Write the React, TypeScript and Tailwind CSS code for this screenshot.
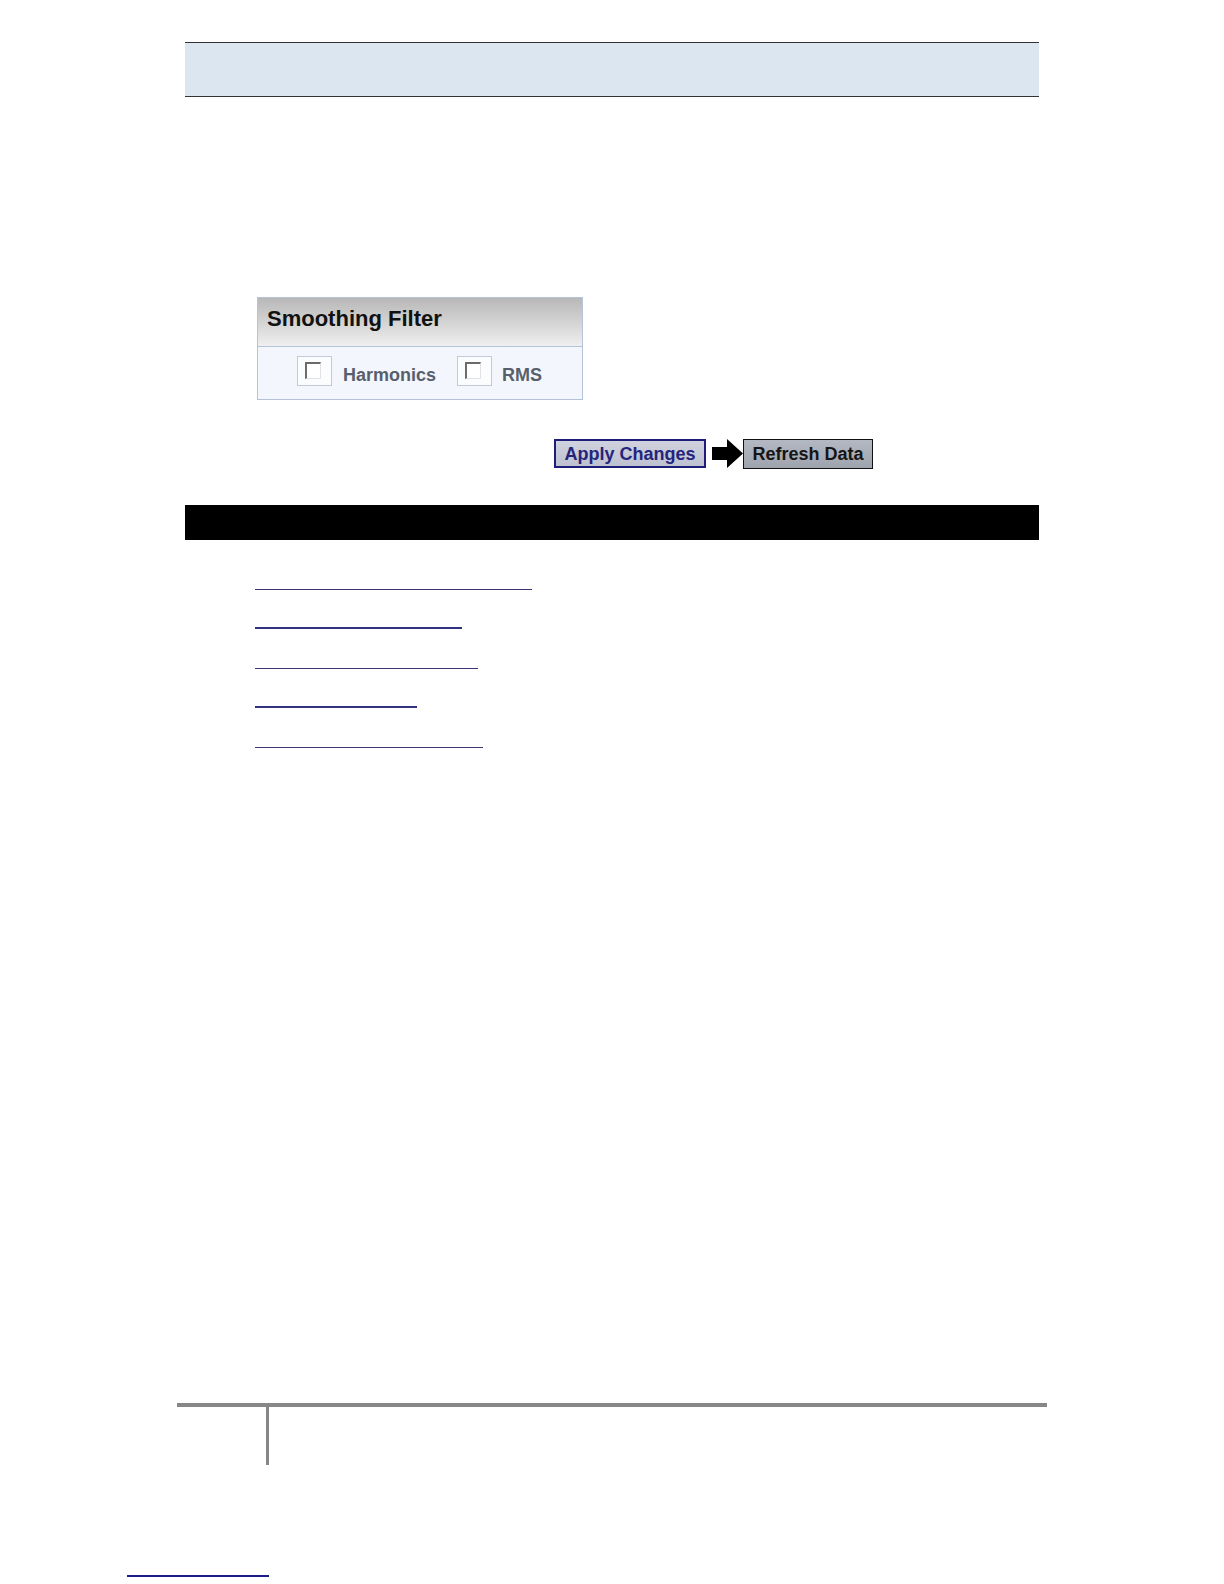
export default function App() {
  const links = [
    { w: 277, thick: false },
    { w: 207, thick: true },
    { w: 223, thick: false },
    { w: 162, thick: true },
    { w: 228, thick: false },
  ];

  return (
    <div className="min-h-[1584px] w-[1224px] bg-white font-['Liberation_Sans',Arial,sans-serif]">
      <div className="ml-[185px] w-[854px] pt-[42px]">
        {/* page header band */}
        <div className="h-[55px] border-y border-[#333] bg-[#dce6f1]" />

        {/* smoothing filter panel */}
        <div className="mt-[200px] ml-[72px] w-[326px] border border-[#b4c3d8]">
          <div className="h-[49px] border-b border-[#b4c3d8] bg-gradient-to-b from-[#b8b8b8] to-[#efefef] pl-[9px] pt-[8px]">
            <span className="text-[22px] leading-[25px] font-bold text-[#111]">Smoothing Filter</span>
          </div>
          <div className="flex h-[52px] items-start bg-[#f3f6fd] pl-[39px] pt-[9px]">
            <CheckCell />
            <span className="ml-[11px] mt-[8px] text-[18px] leading-[22px] font-bold text-[#585f6c]">Harmonics</span>
            <div className="ml-[21px]">
              <CheckCell />
            </div>
            <span className="ml-[10px] mt-[8px] text-[18px] leading-[22px] font-bold text-[#585f6c]">RMS</span>
          </div>
        </div>

        {/* actions */}
        <div className="mt-[38px] ml-[369px] flex items-center">
          <button className="h-[29px] w-[152px] border-2 border-[#1e1e7a] bg-gradient-to-b from-[#d0d2de] to-[#bec1d0] text-[18px] leading-[24px] font-bold text-[#24247c]">
            Apply Changes
          </button>
          <svg width="31" height="31" viewBox="0 0 31 31" className="ml-[6px]">
            <polygon points="0,9 15,9 15,1 31,15.5 15,30 15,22 0,22" fill="#000" />
          </svg>
          <button className="h-[30px] w-[130px] border-[1.5px] border-[#111] bg-gradient-to-b from-[#b4b8c2] to-[#9fa3ae] text-[18px] leading-[24px] font-bold text-[#151515]">
            Refresh Data
          </button>
        </div>

        {/* section bar */}
        <div className="mt-[36px] h-[35px] bg-black" />

        {/* related links */}
        <div className="ml-[70px] mt-[10px] flex flex-col">
          {links.map((l, i) => (
            <div key={i} className="flex h-[39.5px] items-end">
              <a
                href="#"
                className={l.thick ? "block h-[2px] bg-[#2f3380]" : "block h-px bg-[#3a3575]"}
                style={{ width: l.w }}
              />
            </div>
          ))}
        </div>
      </div>

      {/* page footer */}
      <div className="ml-[177px] mt-[655px] w-[870px]">
        <div className="h-[4px] bg-[#878787]" />
        <div className="ml-[89px] h-[58px] w-[3px] bg-[#878787]" />
      </div>
      <div className="ml-[127px] mt-[110px] h-[2px] w-[142px] bg-[#1c1c8c]" />
    </div>
  );
}

function CheckCell() {
  return (
    <div className="flex h-[30px] w-[35px] items-start justify-start border border-[#c3cad6] bg-[#fbfcfe] pl-[7px] pt-[5px]">
      <div className="h-[17px] w-[16px] border-t-2 border-l-2 border-b border-r border-t-[#6b6b6b] border-l-[#6b6b6b] border-b-[#e2e2e2] border-r-[#e2e2e2] bg-white" />
    </div>
  );
}
